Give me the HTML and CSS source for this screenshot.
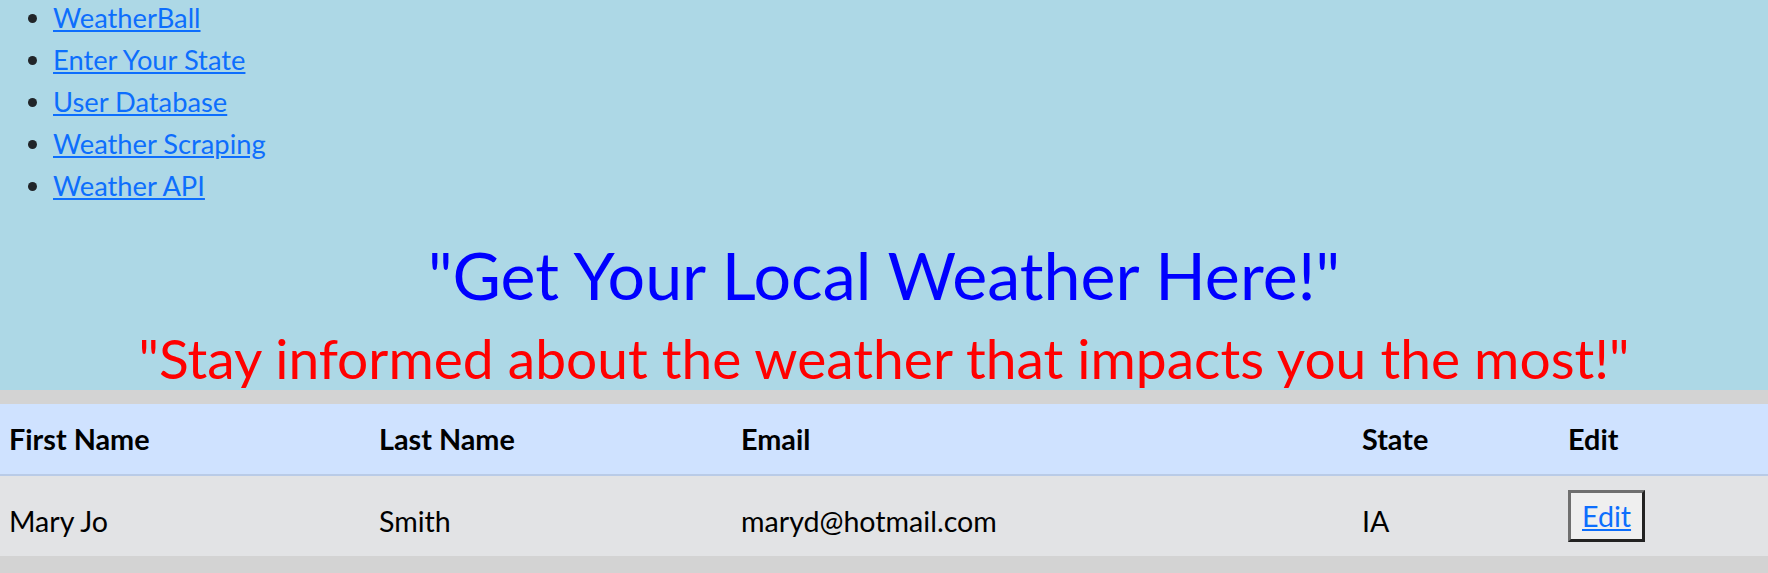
FILE: index.html
```html
<!DOCTYPE html>
<html lang="en">
<head>
<meta charset="utf-8">
<title>WeatherBall - User Database</title>
<link rel="stylesheet" href="styles.css">
</head>
<body>
<header class="hero">
  <ul class="nav-list">
    <li><a href="#">WeatherBall</a></li>
    <li><a href="#">Enter Your State</a></li>
    <li><a href="#">User Database</a></li>
    <li><a href="#">Weather Scraping</a></li>
    <li><a href="#">Weather API</a></li>
  </ul>
  <h1 class="title">"Get Your Local Weather Here!"</h1>
  <h2 class="subtitle">"Stay informed about the weather that impacts you the most!"</h2>
</header>
<main class="content">
  <table class="users">
    <colgroup>
      <col class="col-first">
      <col class="col-last">
      <col class="col-email">
      <col class="col-state">
      <col class="col-edit">
    </colgroup>
    <thead>
      <tr>
        <th>First Name</th>
        <th>Last Name</th>
        <th>Email</th>
        <th>State</th>
        <th>Edit</th>
      </tr>
    </thead>
    <tbody>
      <tr>
        <td>Mary Jo</td>
        <td>Smith</td>
        <td>maryd@hotmail.com</td>
        <td>IA</td>
        <td><button class="edit-btn" type="button"><a href="#">Edit</a></button></td>
      </tr>
    </tbody>
  </table>
</main>
</body>
</html>
```

FILE: styles.css
```css
html, body {
  margin: 0;
  padding: 0;
}

body {
  background: #d3d3d3;
  color: #212529;
  font-family: Lato, "Open Sans", sans-serif;
  font-weight: 400;
}

a {
  color: #0d6efd;
  text-decoration: underline;
}

.hero {
  display: flow-root;
  background: #add8e6;
}

.nav-list {
  margin: -3px 0 28px;
  padding: 0 0 0 53px;
  font-size: 27.3px;
  line-height: 42px;
}

.nav-list li::marker {
  color: #212529;
}

.title {
  margin: 0 0 12px;
  color: #0000ff;
  font-size: 66.3px;
  font-weight: 400;
  line-height: 80px;
  text-align: center;
}

.subtitle {
  margin: 0;
  color: #ff0000;
  font-size: 55.1px;
  font-weight: 400;
  line-height: 63px;
  text-align: center;
}

.content {
  padding-top: 14px;
}

.users {
  width: 100%;
  table-layout: fixed;
  border-collapse: separate;
  border-spacing: 0;
  color: #000;
}

.col-first { width: 370px; }
.col-last { width: 362px; }
.col-email { width: 621px; }
.col-state { width: 206px; }
.col-edit { width: 209px; }

.users th,
.users td {
  padding: 14px 9px;
  line-height: 42px;
  text-align: left;
  vertical-align: bottom;
}

.users th {
  background: #cfe2ff;
  border-bottom: 2px solid #b9cbe7;
  font-size: 28.8px;
  font-weight: 700;
}

.users td {
  background: #e2e3e5;
  font-size: 28.6px;
}

.edit-btn {
  margin: 0;
  padding: 2px 11px;
  border: 3px solid;
  border-color: #6f6f6f #222 #222 #6f6f6f;
  background: #efefef;
  font: inherit;
  line-height: 42px;
  cursor: pointer;
}
```
